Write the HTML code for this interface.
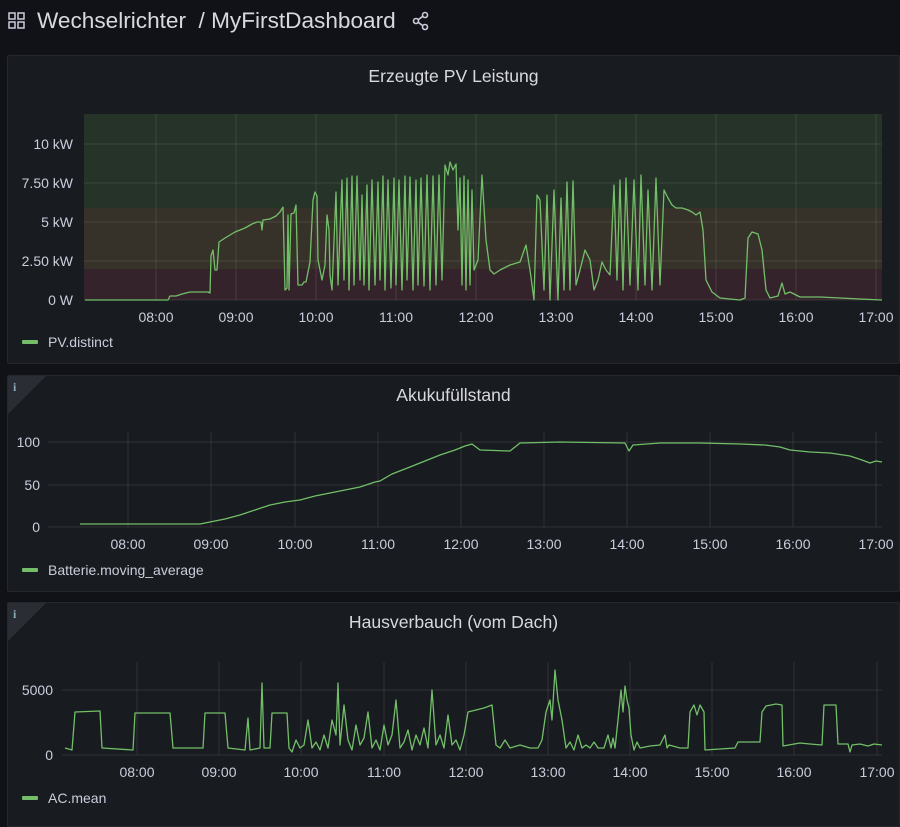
<!DOCTYPE html>
<html><head><meta charset="utf-8"><style>
body{margin:0;width:900px;height:822px;background:#111217;font-family:"Liberation Sans",sans-serif;color:#ccccdc;overflow:hidden;position:relative}
.p{position:absolute;left:7px;width:893px;background:#181b1f;border:1px solid #25272d;border-radius:2px;box-sizing:border-box}
.t{position:absolute;width:100%;text-align:center;font-size:17.6px;color:#d8d9e0}
.info{position:absolute;left:0;top:0;width:0;height:0;border-top:38px solid #2a2d33;border-right:38px solid transparent}
.i{position:absolute;left:5px;top:4px;font-size:12px;font-weight:bold;color:#8ab;font-family:"Liberation Serif",serif}
svg{position:absolute;left:0;top:0}
</style></head><body>
<svg width="30" height="40" style="left:8px;top:12px"><g fill="none" stroke="#ccccdc" stroke-width="1.5"><rect x="1" y="1" width="6" height="6"/><rect x="10" y="1" width="6" height="6"/><rect x="1" y="10" width="6" height="6"/><rect x="10" y="10" width="6" height="6"/></g></svg>
<div style="position:absolute;left:37px;top:8px;font-size:22.6px;color:#d8d9e0">Wechselrichter &nbsp;/ MyFirstDashboard</div>
<svg width="24" height="24" style="left:411px;top:10px"><g fill="none" stroke="#ccccdc" stroke-width="1.6"><circle cx="14" cy="5" r="2.5"/><circle cx="14" cy="17" r="2.5"/><circle cx="5" cy="11" r="2.5"/><path d="M7.2 9.8L11.8 6.3M7.2 12.2L11.8 15.7"/></g></svg>
<div class="p" style="top:55px;height:309px"><div class="t" style="top:10px">Erzeugte PV Leistung</div></div>
<div class="p" style="top:375px;height:217px"><div class="info"></div><div class="i">i</div><div class="t" style="top:9px">Akukufüllstand</div></div>
<div class="p" style="top:602px;height:225px"><div class="info"></div><div class="i">i</div><div class="t" style="top:9px">Hausverbauch (vom Dach)</div></div>
<svg width="900" height="822" font-family="Liberation Sans" font-size="14" fill="#ccccdc">
<rect x="84" y="114" width="798" height="94" fill="#253328"/>
<rect x="84" y="208" width="798" height="61" fill="#36322a"/>
<rect x="84" y="269" width="798" height="31" fill="#35232b"/>
<g stroke="#ffffff" stroke-opacity="0.1" stroke-width="1">
<path d="M84 144H882M84 183H882M84 222H882M84 261H882M84 300H882"/>
<path d="M156 114V300M236 114V300M316 114V300M396 114V300M476 114V300M556 114V300M636 114V300M716 114V300M796 114V300M876 114V300"/>
<path d="M48 442H882M48 485H882M48 527H882"/>
<path d="M128 432V527M211 432V527M295 432V527M378 432V527M461 432V527M544 432V527M627 432V527M710 432V527M793 432V527M876 432V527"/>
<path d="M62 690H882M62 755H882"/>
<path d="M137 662V755M219 662V755M301 662V755M384 662V755M466 662V755M548 662V755M630 662V755M712 662V755M794 662V755M877 662V755"/>
</g>
<g text-anchor="end"><text x="73" y="149">10 kW</text><text x="73" y="188">7.50 kW</text><text x="73" y="227">5 kW</text><text x="73" y="266">2.50 kW</text><text x="73" y="305">0 W</text>
<text x="40" y="447">100</text><text x="40" y="490">50</text><text x="40" y="532">0</text>
<text x="53" y="695">5000</text><text x="53" y="760">0</text></g>
<g text-anchor="middle">
<text x="156" y="322">08:00</text><text x="236" y="322">09:00</text><text x="316" y="322">10:00</text><text x="396" y="322">11:00</text><text x="476" y="322">12:00</text><text x="556" y="322">13:00</text><text x="636" y="322">14:00</text><text x="716" y="322">15:00</text><text x="796" y="322">16:00</text><text x="876" y="322">17:00</text>
<text x="128" y="549">08:00</text><text x="211" y="549">09:00</text><text x="295" y="549">10:00</text><text x="378" y="549">11:00</text><text x="461" y="549">12:00</text><text x="544" y="549">13:00</text><text x="627" y="549">14:00</text><text x="710" y="549">15:00</text><text x="793" y="549">16:00</text><text x="876" y="549">17:00</text>
<text x="137" y="777">08:00</text><text x="219" y="777">09:00</text><text x="301" y="777">10:00</text><text x="384" y="777">11:00</text><text x="466" y="777">12:00</text><text x="548" y="777">13:00</text><text x="630" y="777">14:00</text><text x="712" y="777">15:00</text><text x="794" y="777">16:00</text><text x="877" y="777">17:00</text></g>
<g fill="#73bf69"><rect x="22" y="340" width="16" height="4" rx="1"/><rect x="22" y="568" width="16" height="4" rx="1"/><rect x="22" y="796" width="16" height="4" rx="1"/></g>
<text x="48" y="347">PV.distinct</text><text x="48" y="575">Batterie.moving_average</text><text x="48" y="803">AC.mean</text>
<g fill="none" stroke="#73bf69" stroke-width="1.3" stroke-linejoin="round">
<polyline points="85,300 168,300 170,296 176,296 182,294 190,292 198,292 208,292 210,293 211,256 213,250 215,270 217,270 219,242 225,238 235,232 245,228 252,224 257,222 261,222 262,230 263,220 270,219 276,216 280,212 283,207 285,290 287,288 288,215 289,290 291,214 294,213 296,205 298,285 300,285 302,285 304,282 306,282 310,262 313,200 315,192 317,196 318,260 322,280 325,265 327,215 329,230 330,275 332,290 336,192 338,285 342,180 344,280 347,178 349,290 352,176 354,285 357,176 360,280 362,195 364,285 367,185 369,290 372,180 375,285 378,182 380,280 383,176 385,290 388,180 391,288 394,178 396,285 399,180 402,290 405,176 407,280 410,177 413,290 416,180 418,285 421,178 424,286 427,175 430,290 433,176 436,285 439,175 442,280 445,165 448,175 450,162 453,170 456,164 458,230 460,178 462,285 464,176 466,290 468,180 470,285 472,190 474,270 478,260 482,175 486,240 490,270 494,274 500,270 510,265 520,262 526,245 530,270 534,300 537,195 540,200 544,290 547,195 550,300 554,190 558,300 561,198 564,290 567,182 570,290 573,181 576,285 580,270 585,250 590,260 594,290 598,280 602,262 606,270 610,275 614,185 617,280 620,180 623,290 626,178 630,285 634,180 638,290 641,175 645,285 648,190 652,290 656,178 660,285 664,190 668,198 672,205 676,208 682,208 688,210 692,212 696,215 700,212 703,230 706,280 712,292 720,298 740,300 745,298 748,238 752,232 758,234 762,250 766,290 770,298 778,296 782,283 785,294 790,292 800,297 820,297 840,298 860,299 882,300"/>
<polyline points="80,524 200,524 210,522 225,519 240,515 255,510 270,505 285,502 300,500 315,496 330,493 345,490 360,487 375,482 380,481 392,474 410,467 425,461 440,455 455,450 465,446 472,444 480,450 510,451 520,443 560,442 625,443 629,451 633,445 660,443 700,443 740,444 765,445 780,447 790,450 810,452 830,453 850,456 862,460 870,463 876,461 882,462"/>
<polyline points="65,748 72,750 75,712 100,711 102,748 133,750 135,713 170,713 173,748 203,748 205,713 225,713 228,748 245,750 248,718 250,750 260,748 262,683 264,748 270,748 272,713 287,713 289,748 292,752 296,740 300,748 304,745 308,720 312,748 316,742 320,750 324,735 328,748 332,720 336,735 338,683 340,745 344,705 348,740 352,750 356,725 360,745 364,738 368,712 372,748 376,740 380,750 384,725 388,745 392,735 396,700 400,748 404,742 408,730 412,750 416,735 420,745 424,728 428,748 432,690 436,745 440,735 444,748 448,715 452,745 456,740 460,750 464,735 468,712 476,710 484,708 492,705 496,745 500,748 505,740 510,748 520,745 530,748 538,748 542,740 546,712 550,700 552,720 555,670 558,700 562,720 566,748 570,742 574,750 578,735 582,748 586,745 590,748 594,742 598,748 604,748 608,735 611,748 613,738 615,748 618,720 621,690 623,712 625,686 627,700 629,708 631,735 634,750 637,742 640,748 650,746 660,745 665,735 667,748 669,745 680,748 688,748 690,712 694,705 697,715 700,705 704,712 705,750 720,749 735,748 738,742 760,742 762,712 766,706 776,704 782,705 783,746 800,743 810,744 822,745 824,705 836,705 838,744 848,744 850,752 852,745 860,744 868,746 874,744 882,745"/>
</g>
</svg>
</body></html>
